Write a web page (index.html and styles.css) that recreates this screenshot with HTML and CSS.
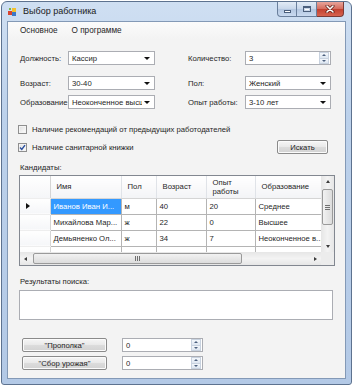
FILE: index.html
```html
<!DOCTYPE html>
<html lang="ru">
<head>
  <meta charset="UTF-8">
  <title>Выбор работника</title>
  <link rel="stylesheet" href="styles.css">
</head>
<body>

  <div class="window">
    <div class="titlebar">
      <svg class="app-icon" width="8" height="8" viewBox="0 0 8 8">
        <rect x="0" y="3" width="4" height="4" fill="#d9442f"/>
        <rect x="4" y="0" width="4" height="4" fill="#f2c12e"/>
        <rect x="4" y="4" width="4" height="4" fill="#3b78c9"/>
        <rect x="1" y="0" width="2" height="2" fill="#7fb24a"/>
      </svg>
      <span class="title">Выбор работника</span>
      <div class="caption-buttons">
        <div class="cap-btn cap-min"><span class="min-bar"></span></div>
        <div class="cap-btn cap-max"><span class="max-box"></span></div>
        <div class="cap-btn cap-close">
          <svg width="10" height="8" viewBox="0 0 10 8">
            <path d="M2 1 L8 7 M8 1 L2 7" stroke="#5a1a12" stroke-width="3" stroke-linecap="round"/>
            <path d="M2 1 L8 7 M8 1 L2 7" stroke="#ffffff" stroke-width="1.6" stroke-linecap="round"/>
          </svg>
        </div>
      </div>
    </div>

    <div class="client">
      <nav class="menu">
        <span>Основное</span>
        <span>О программе</span>
      </nav>

      <div class="form-row row-1">
        <label class="lbl lbl-left">Должность:</label>
        <div class="combo combo-left"><span>Кассир</span><i class="arrow"></i></div>
        <label class="lbl lbl-right">Количество:</label>
        <div class="numeric numeric-right">
          <span>3</span>
          <div class="spin"><i class="spin-up"></i><i class="spin-down"></i></div>
        </div>
      </div>

      <div class="form-row row-2">
        <label class="lbl lbl-left">Возраст:</label>
        <div class="combo combo-left"><span>30-40</span><i class="arrow"></i></div>
        <label class="lbl lbl-right">Пол:</label>
        <div class="combo combo-right"><span>Женский</span><i class="arrow"></i></div>
      </div>

      <div class="form-row row-3">
        <label class="lbl lbl-left">Образование:</label>
        <div class="combo combo-left"><span>Неоконченное высш</span><i class="arrow"></i></div>
        <label class="lbl lbl-right">Опыт работы:</label>
        <div class="combo combo-right"><span>3-10 лет</span><i class="arrow"></i></div>
      </div>

      <div class="check-row check-1">
        <span class="checkbox"></span>
        <span>Наличие рекомендаций от предыдущих работодателей</span>
      </div>

      <div class="check-row check-2">
        <span class="checkbox checked">
          <svg width="7" height="7" viewBox="0 0 7 7"><path d="M1 3.6 L2.8 5.5 L6 1.2" fill="none" stroke="#2a4f9e" stroke-width="1.4"/></svg>
        </span>
        <span>Наличие санитарной книжки</span>
        <button class="btn btn-search">Искать</button>
      </div>

      <div class="caption cap-candidates">Кандидаты:</div>

      <div class="datagrid">
        <div class="grid-body">
          <table class="grid-table">
            <colgroup>
              <col style="width:30px">
              <col style="width:71px">
              <col style="width:35px">
              <col style="width:50px">
              <col style="width:49px">
              <col style="width:82px">
            </colgroup>
            <thead>
              <tr>
                <th class="row-head"></th>
                <th>Имя</th>
                <th>Пол</th>
                <th>Возраст</th>
                <th>Опыт<br>работы</th>
                <th>Образование</th>
              </tr>
            </thead>
            <tbody>
              <tr>
                <td class="row-head"><i class="current"></i></td>
                <td class="selected">Иванов Иван И...</td>
                <td>м</td>
                <td>40</td>
                <td>20</td>
                <td>Среднее</td>
              </tr>
              <tr>
                <td class="row-head"></td>
                <td>Михайлова Мар...</td>
                <td>ж</td>
                <td>22</td>
                <td>0</td>
                <td>Высшее</td>
              </tr>
              <tr>
                <td class="row-head"></td>
                <td>Демьяненко Ол...</td>
                <td>ж</td>
                <td>34</td>
                <td>7</td>
                <td>Неоконченное в...</td>
              </tr>
              <tr>
                <td class="row-head"></td>
                <td>Сидорова Вер...</td>
                <td>ж</td>
                <td>19</td>
                <td>0</td>
                <td>Неоконченное в...</td>
              </tr>
            </tbody>
          </table>
        </div>
        <div class="vscroll">
          <i class="sb-arrow sb-up"></i>
          <div class="sb-track"><div class="sb-thumb v-thumb"><span class="grip"></span></div></div>
          <i class="sb-arrow sb-down"></i>
        </div>
        <div class="hscroll">
          <i class="sb-arrow sb-left"></i>
          <div class="sb-track"><div class="sb-thumb h-thumb"><span class="grip"></span></div></div>
          <i class="sb-arrow sb-right"></i>
        </div>
        <div class="sb-corner"></div>
      </div>

      <div class="caption cap-results">Результаты поиска:</div>
      <div class="textbox"></div>

      <div class="action-row action-1">
        <button class="btn btn-action">"Прополка"</button>
        <div class="numeric numeric-action">
          <span>0</span>
          <div class="spin"><i class="spin-up"></i><i class="spin-down"></i></div>
        </div>
      </div>
      <div class="action-row action-2">
        <button class="btn btn-action">"Сбор урожая"</button>
        <div class="numeric numeric-action">
          <span>0</span>
          <div class="spin"><i class="spin-up"></i><i class="spin-down"></i></div>
        </div>
      </div>
    </div>
  </div>

</body>
</html>
```

FILE: styles.css
```css
:root {
  --fonte: "Liberation Sans", Arial, sans-serif;
  --cor-texto: #262626;
  --cor-form: #f3f3f3;
  --cor-borda: #abadb3;
  --cor-grade: #b4b4b4;
  --cor-selecao: #3399ff;
}

* {
  margin: 0;
  padding: 0;
  box-sizing: border-box;
}

body {
  background-color: #ffffff;
  font-family: var(--fonte);
  font-size: 7.7px;
  color: var(--cor-texto);
}

/* janela */

.window {
  margin: 1px;
  width: 351px;
  height: 384px;
  border: 1px solid #5d728f;
  border-radius: 6px 6px 3px 3px;
  background: linear-gradient(180deg, #cfdff2 0%, #bcd1eb 30%, #b3c9e6 100%);
  display: flex;
  flex-direction: column;
}

.titlebar {
  height: 19px;
  display: flex;
  align-items: center;
  padding-left: 6px;
}

.app-icon {
  margin-right: 7px;
}

.title {
  font-size: 9px;
  color: #1a1a1a;
  padding-bottom: 1px;
}

.caption-buttons {
  margin-left: auto;
  margin-right: 7px;
  align-self: flex-start;
  display: flex;
  height: 15px;
}

.cap-btn {
  height: 15px;
  display: flex;
  align-items: center;
  justify-content: center;
  border: 1px solid #6a7f9c;
  border-top: none;
  background: linear-gradient(180deg, #e2ebf6 0%, #c7d6ea 50%, #b3c6e0 51%, #c9daf0 100%);
}

.cap-min {
  width: 20px;
  border-radius: 0 0 0 4px;
}

.cap-max {
  width: 20px;
  border-left: none;
}

.cap-close {
  width: 27px;
  border-left: none;
  border-color: #7b3a35;
  border-radius: 0 0 4px 0;
  background: linear-gradient(180deg, #e8a59b 0%, #d46a5c 50%, #c2402f 51%, #d7634f 100%);
}

.min-bar {
  width: 7px;
  height: 3px;
  margin-top: 4px;
  background: #ffffff;
  border: 1px solid #4b5f7c;
}

.max-box {
  width: 8px;
  height: 6px;
  border: 1px solid #4b5f7c;
  border-top-width: 2px;
  background: #ffffff;
  box-shadow: inset 0 0 0 1px #c9d6e8;
}

.client {
  flex: 1;
  margin: 0 5px 5px 5px;
  border: 1px solid #8399b6;
  background-color: var(--cor-form);
}

.menu {
  height: 17px;
  display: flex;
  align-items: center;
  padding-left: 12px;
  background: linear-gradient(180deg, #fbfbfb, #f3f3f3);
  font-size: 8.2px;
}

.menu span {
  margin-right: 14px;
}

/* formulário */

.form-row {
  display: flex;
  align-items: center;
  height: 14px;
}

.row-1 { margin-top: 12px; }
.row-2 { margin-top: 11px; }
.row-3 { margin-top: 5px; }

.lbl {
  white-space: nowrap;
}

.lbl-left {
  width: 48px;
  margin-left: 12px;
}

.lbl-right {
  width: 57px;
  margin-left: 33px;
}

.combo, .numeric {
  height: 14px;
  background: #ffffff;
  border: 1px solid var(--cor-borda);
  display: flex;
  align-items: center;
  overflow: hidden;
}

.combo span, .numeric span {
  flex: 1;
  padding-left: 3px;
  white-space: nowrap;
  overflow: hidden;
}

.combo-left { width: 87px; }
.combo-right { width: 86px; }
.numeric-right { width: 86px; }

.arrow {
  width: 0;
  height: 0;
  margin: 1px 4px 0 2px;
  border-left: 3px solid transparent;
  border-right: 3px solid transparent;
  border-top: 3px solid #111;
}

.spin {
  width: 10px;
  height: 12px;
  margin-right: 1px;
  display: flex;
  flex-direction: column;
}

.spin i {
  flex: 1;
  display: flex;
  align-items: center;
  justify-content: center;
  border: 1px solid #c8d2df;
  background: linear-gradient(180deg, #f4f7fb, #dde6f1);
}

.spin-up { border-bottom: none !important; }

.spin-up::after, .spin-down::after {
  content: "";
  border-left: 2px solid transparent;
  border-right: 2px solid transparent;
}

.spin-up::after { border-bottom: 2px solid #4c607e; }
.spin-down::after { border-top: 2px solid #4c607e; }

/* caixas de seleção */

.check-row {
  display: flex;
  align-items: center;
  height: 14px;
  padding-left: 10px;
}

.check-1 { margin-top: 13px; }
.check-2 { margin-top: 4px; }

.checkbox {
  width: 9px;
  height: 9px;
  margin-right: 5px;
  border: 1px solid #8f8f8f;
  background: linear-gradient(135deg, #dcdcdc, #ffffff);
  box-shadow: inset 0 0 0 1px #f4f4f4;
  display: flex;
  align-items: center;
  justify-content: center;
}

.btn {
  font-family: var(--fonte);
  font-size: 7.7px;
  color: var(--cor-texto);
  height: 14px;
  border: 1px solid #8a8a8a;
  border-radius: 2px;
  background: linear-gradient(180deg, #f6f6f6 0%, #e9e9e9 48%, #dcdcdc 52%, #d2d2d2 100%);
  box-shadow: inset 0 0 0 1px #fbfbfb;
}

.btn-search {
  width: 51px;
  margin-left: auto;
  margin-right: 17px;
}

.caption {
  height: 10px;
  line-height: 10px;
  padding-left: 12px;
}

.cap-candidates { margin-top: 9px; }
.cap-results { margin-top: 11px; }

/* grade de dados */

.datagrid {
  margin: 2px 0 0 11px;
  width: 316px;
  height: 91px;
  border: 1px solid #828790;
  background: #ababab;
  display: grid;
  grid-template-columns: 1fr 13px;
  grid-template-rows: 1fr 13px;
  overflow: hidden;
}

.grid-body {
  overflow: hidden;
}

.grid-table {
  border-collapse: collapse;
  table-layout: fixed;
  width: 317px;
  background: #ffffff;
}

.grid-table th {
  height: 22px;
  font-weight: normal;
  text-align: left;
  padding-left: 6px;
  line-height: 9px;
  background: linear-gradient(180deg, #ffffff, #f3f4f6);
  border-right: 1px solid #e0e3e8;
  border-bottom: 1px solid #d5d5d5;
  white-space: nowrap;
}

.grid-table td {
  height: 16px;
  padding-left: 3px;
  border-right: 1px solid var(--cor-grade);
  border-bottom: 1px solid var(--cor-grade);
  white-space: nowrap;
  overflow: hidden;
}

.grid-table .row-head {
  background: linear-gradient(180deg, #ffffff, #f5f6f8);
  border-right: 1px solid #d5d5d5;
  border-bottom: 1px solid #eeeeee;
  padding-left: 6px;
}

.current {
  display: block;
  width: 0;
  height: 0;
  border-top: 3px solid transparent;
  border-bottom: 3px solid transparent;
  border-left: 4px solid #111;
}

.grid-table td.selected {
  background: var(--cor-selecao);
  color: #ffffff;
}

/* barras de rolagem */

.vscroll, .hscroll {
  display: flex;
  align-items: center;
  background: linear-gradient(90deg, #e6e6e6, #f3f3f3 50%, #e6e6e6);
}

.vscroll {
  flex-direction: column;
}

.hscroll {
  background: linear-gradient(180deg, #e6e6e6, #f3f3f3 50%, #e6e6e6);
}

.sb-track {
  flex: 1;
  display: flex;
  align-self: stretch;
}

.vscroll .sb-track {
  padding: 2px 1px 0 1px;
  flex-direction: column;
}

.hscroll .sb-track {
  padding: 1px 0 1px 2px;
}

.sb-thumb {
  border: 1px solid #9a9a9a;
  border-radius: 2px;
  background: linear-gradient(90deg, #f2f2f2, #dcdcdc);
  display: flex;
  align-items: center;
  justify-content: center;
}

.v-thumb {
  height: 36px;
}

.h-thumb {
  width: 209px;
  background: linear-gradient(180deg, #f2f2f2, #dcdcdc);
}

.grip {
  width: 5px;
  height: 5px;
  background: repeating-linear-gradient(180deg, #707070 0 1px, transparent 1px 2px);
}

.h-thumb .grip {
  background: repeating-linear-gradient(90deg, #707070 0 1px, transparent 1px 2px);
}

.sb-arrow {
  width: 0;
  height: 0;
  margin: 4px;
}

.sb-up {
  border-left: 2px solid transparent;
  border-right: 2px solid transparent;
  border-bottom: 3px solid #3c3c3c;
}

.sb-down {
  border-left: 2px solid transparent;
  border-right: 2px solid transparent;
  border-top: 3px solid #3c3c3c;
}

.sb-left {
  border-top: 2px solid transparent;
  border-bottom: 2px solid transparent;
  border-right: 3px solid #3c3c3c;
}

.sb-right {
  border-top: 2px solid transparent;
  border-bottom: 2px solid transparent;
  border-left: 3px solid #3c3c3c;
}

.sb-corner {
  background: #ececec;
}

/* resultados */

.textbox {
  margin: 3px 0 0 11px;
  width: 314px;
  height: 30px;
  background: #ffffff;
  border: 1px solid var(--cor-borda);
}

.action-row {
  display: flex;
  align-items: center;
  height: 14px;
  padding-left: 14px;
}

.action-1 { margin-top: 18px; }
.action-2 { margin-top: 4px; }

.btn-action {
  width: 85px;
  margin-right: 15px;
}

.numeric-action {
  width: 81px;
}
```
